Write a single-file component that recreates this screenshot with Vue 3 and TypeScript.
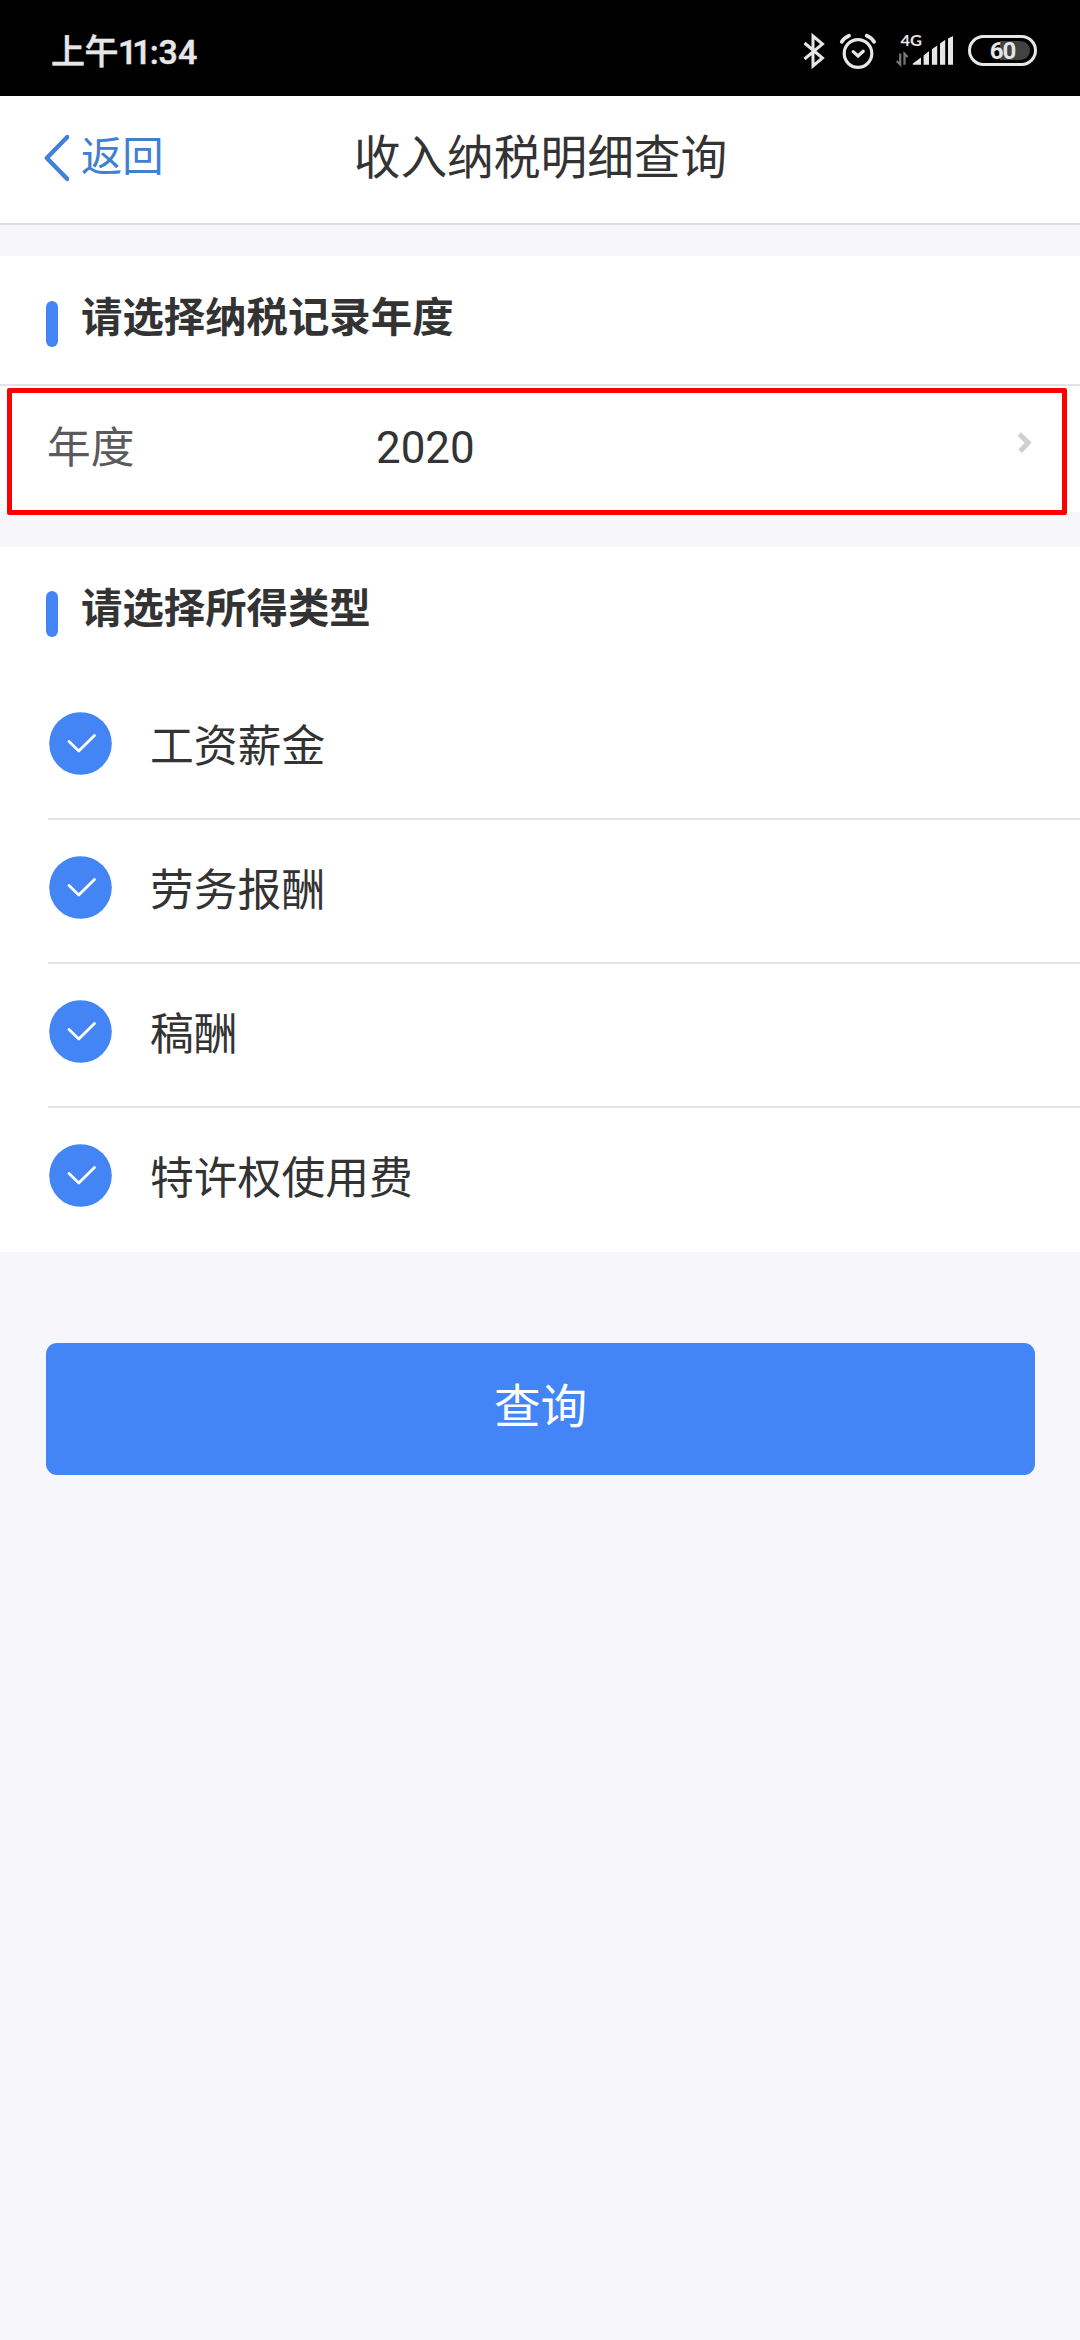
<script setup lang="ts">
import { ref } from 'vue'

interface IncomeType {
  name: string
  checked: boolean
}

const year = ref<string>('2020')
const incomeTypes = ref<IncomeType[]>([
  { name: '工资薪金', checked: true },
  { name: '劳务报酬', checked: true },
  { name: '稿酬', checked: true },
  { name: '特许权使用费', checked: true },
])
</script>

<template>
  <div class="screen">
    <div class="status">
      <div class="time"><span class="period">上午</span><span class="hour">11</span><span class="minute">:34</span></div>
      <div class="indicators">
        <svg class="bluetooth" width="24" height="38" viewBox="0 0 24 38">
          <path d="M2.5 11 L20.5 26 L11 34 V4 L20.5 12 L2.5 27" />
        </svg>
        <svg class="alarm" width="38" height="38" viewBox="0 0 38 38">
          <circle cx="20" cy="21.5" r="13.8" />
          <path d="M15.2 19.6 L20 24 L25.2 19.2" />
          <path d="M3.8 9.8 Q6.5 5.5 11 3.7" stroke-width="3.8" />
          <path d="M28.8 3.7 Q33.5 5.5 36 9.8" stroke-width="3.8" />
        </svg>
        <svg class="signal" width="60" height="38" viewBox="0 0 60 38">
          <text x="6.5" y="14.2" textLength="21.5" lengthAdjust="spacingAndGlyphs">4G</text>
          <path class="data" d="M6.2 21.5 V32.5 L2.8 29 M10.5 32.8 V21.8 L13.6 25" />
          <path class="bars" d="M18.8 32.8 V31.5 L27 25.5 V32.8 Z M29.6 32.8 V23.4 L35 19.3 V32.8 Z M37.9 32.8 V17.2 L43.2 13.5 V32.8 Z M46 32.8 V11.4 L51.2 7.8 V32.8 Z M54 32.8 V6.6 L59 4 V32.8 Z" />
        </svg>
        <div class="battery"><i class="charge"></i><span class="level">60</span></div>
      </div>
    </div>

    <header class="nav">
      <a class="back">
        <svg width="26" height="48" viewBox="0 0 26 48">
          <path d="M24.3 3 L3.8 24 L24.3 45" />
        </svg>
        <span>返回</span>
      </a>
      <h1>收入纳税明细查询</h1>
    </header>

    <section class="card year-card">
      <div class="heading"><i class="mark"></i><h2>请选择纳税记录年度</h2></div>
      <div class="year">
        <span class="label">年度</span>
        <span class="value">{{ year }}</span>
        <svg width="18" height="24" viewBox="0 0 18 24">
          <path d="M3.2 3 L12.2 11.7 L4.2 20.4" />
        </svg>
      </div>
      <div class="highlight"></div>
    </section>

    <section class="card types-card">
      <div class="heading"><i class="mark"></i><h2>请选择所得类型</h2></div>
      <ul>
        <li v-for="item in incomeTypes" :key="item.name" @click="item.checked = !item.checked">
          <svg width="63" height="63" viewBox="0 0 63 63">
            <circle cx="31.5" cy="31.5" r="31.3" :class="{ off: !item.checked }" />
            <path d="M20 29.5 L29.8 39 L45.5 23.5" />
          </svg>
          <span>{{ item.name }}</span>
        </li>
      </ul>
    </section>

    <button class="query" type="button">查询</button>
  </div>
</template>

<style>
body {
  margin: 0;
  background: #f6f6fb;
}
</style>

<style scoped>
.screen {
  width: 1080px;
  height: 2340px;
  overflow: hidden;
  background: #f6f6fb;
  color: #333;
  font-family: 'Noto Sans CJK SC', sans-serif;
}
.status {
  display: flex;
  justify-content: space-between;
  height: 96px;
  padding: 0 43px 0 51px;
  background: #000;
  color: #e6e6e6;
}
.time {
  display: flex;
  font: 500 34px/40px Roboto, 'Noto Sans CJK SC', sans-serif;
  padding-top: 32px;
  -webkit-text-stroke: 0.5px #e6e6e6;
}
.period {
  letter-spacing: -0.5px;
}
.hour {
  letter-spacing: -5px;
}
.minute {
  padding-left: 3px;
}
.indicators {
  display: flex;
  padding-top: 32px;
}
.indicators svg {
  fill: none;
  stroke: #e6e6e6;
}
.bluetooth {
  margin-right: 12px;
  stroke-width: 3;
}
.alarm {
  margin-right: 18px;
  stroke-width: 3.2;
  stroke-linecap: round;
}
.indicators .signal {
  margin-right: 14px;
  overflow: visible;
}
.signal text {
  fill: #e6e6e6;
  stroke: none;
  font: 700 16px Lato, sans-serif;
}
.signal .data {
  stroke: #777;
  stroke-width: 2.2;
}
.signal .bars {
  fill: #e6e6e6;
  stroke: none;
}
.battery {
  position: relative;
  box-sizing: border-box;
  width: 69px;
  height: 31px;
  margin-top: 3px;
  border: 3px solid #e6e6e6;
  border-radius: 16px;
  text-align: center;
}
.charge {
  position: absolute;
  left: 29px;
  top: 3px;
  width: 30px;
  height: 19px;
  border-radius: 0 10px 10px 0;
  background: #424242;
}
.level {
  position: relative;
  display: block;
  font: 700 24px/27px Roboto, sans-serif;
  letter-spacing: -1px;
}
.nav {
  position: relative;
  display: flex;
  justify-content: center;
  height: 127px;
  border-bottom: 2px solid #dedee2;
  background: #fff;
}
.back {
  position: absolute;
  left: 43px;
  top: 36px;
  display: flex;
  gap: 12px;
  color: #4080d0;
  font-size: 41.3px;
  line-height: 42px;
}
.back svg {
  fill: none;
  stroke: #4380dc;
  stroke-width: 4.4;
  stroke-linecap: round;
  stroke-linejoin: round;
  margin-top: 2px;
}
h1 {
  margin: 0;
  padding-left: 1px;
  font-size: 46.7px;
  font-weight: 400;
  line-height: 116px;
}
.card {
  position: relative;
  background: #fff;
}
.year-card {
  height: 256px;
  margin-top: 31px;
}
.types-card {
  height: 705px;
  margin-top: 35px;
}
.heading {
  display: flex;
  box-sizing: border-box;
  height: 129px;
  padding-left: 46px;
}
.mark {
  width: 12px;
  height: 46px;
  margin-top: 44px;
  border-radius: 6px;
  background: #4385f5;
}
.year-card .mark {
  margin-top: 45px;
}
h2 {
  margin: 0 0 0 23px;
  font-size: 41.4px;
  font-weight: 700;
  line-height: 116px;
}
.year-card .heading {
  height: 130px;
  border-bottom: 2px solid #e4e4e6;
}
.year {
  display: flex;
  line-height: 116px;
}
.label {
  width: 329px;
  padding-left: 47px;
  color: #5a5a5e;
  font-size: 43.7px;
}
.value {
  flex: 1;
  font: 400 43.9px/124px Roboto, sans-serif;
}
.year svg {
  margin: 45px 46px 0 0;
  fill: none;
  stroke: #cfcfcf;
  stroke-width: 5;
}
.highlight {
  position: absolute;
  left: 7px;
  top: 132px;
  box-sizing: border-box;
  width: 1060px;
  height: 127px;
  border: 5px solid #f00;
  border-radius: 2px;
}
ul {
  margin: 0;
  padding: 0 0 0 48px;
  list-style: none;
}
li {
  display: flex;
  box-sizing: border-box;
  height: 144px;
  padding: 36px 0 0 1px;
  border-bottom: 2px solid #e2e2e4;
}
li:last-child {
  border-bottom: 0;
}
li svg {
  margin-right: 38px;
}
li circle {
  fill: #4385f5;
}
li circle.off {
  fill: #ccc;
}
li path {
  fill: none;
  stroke: #fff;
  stroke-width: 2.8;
  stroke-linecap: round;
  stroke-linejoin: round;
}
li span {
  font-size: 43.8px;
  line-height: 62px;
}
.query {
  display: block;
  width: 989px;
  height: 132px;
  margin: 91px 0 0 46px;
  padding: 0 0 12px;
  border: 0;
  border-radius: 11px;
  background: #4385f7;
  color: #fff;
  font: 400 46.6px/120px 'Noto Sans CJK SC', sans-serif;
}
</style>
